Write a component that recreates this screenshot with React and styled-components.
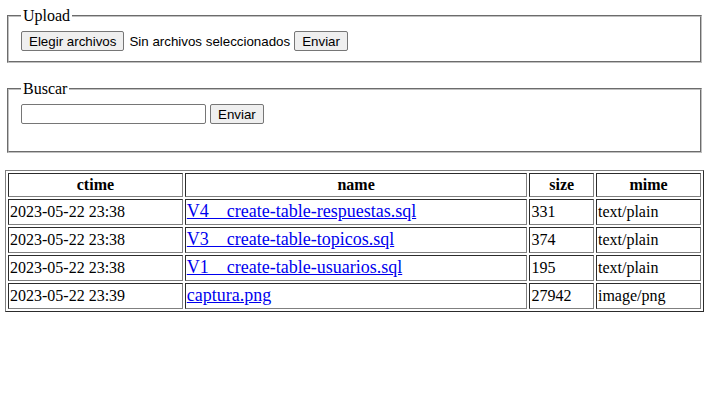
import React from "react"
import styled, { createGlobalStyle } from "styled-components"

const GlobalStyle = createGlobalStyle`
    body {
        margin: 7px 5px 5px;
        font-family: "Liberation Serif", "Times New Roman", serif;
        font-size: 16px;
        color: #000;
        background: #fff;
    }
`

const Form = styled.form`
    margin: 0 0 ${props => props.gap || 0}px 0;
`

const FieldSet = styled.fieldset`
    margin: 0 2px;
    padding: 6px 12px 10px;
    border: 2px groove #c0c0c0;
`

const Legend = styled.legend`
    padding: 0 2px;
`

const Row = styled.div`
    display: flex;
    align-items: ${props => props.top ? "flex-start" : "center"};
    height: ${props => props.h || 20}px;
`

const Button = styled.button`
    box-sizing: border-box;
    height: 20px;
    font-family: "Liberation Sans", Arial, sans-serif;
    font-size: 13.333px;
    padding: 0 7px;
    background: #efefef;
    border: 1px solid #767676;
    border-radius: 2px;
    color: #000;
    margin: 0;
    cursor: default;
`

const FileLabel = styled.span`
    font-family: "Liberation Sans", Arial, sans-serif;
    font-size: 13.333px;
    margin: 0 4px 0 5px;
`

const TextInput = styled.input`
    box-sizing: border-box;
    height: 20px;
    font-family: "Liberation Sans", Arial, sans-serif;
    font-size: 13.333px;
    width: 185px;
    padding: 1px 2px;
    border: 1px solid #767676;
    border-radius: 2px;
    margin: 0 4px 0 0;
`

const Table = styled.table`
    width: 100%;
    border: 1px outset #808080;
    border-spacing: 2px;
    margin-top: 17px;
`

const Th = styled.th`
    border: 1px inset #808080;
    padding: 1px;
    height: 20px;
    line-height: 20px;
    font-weight: bold;
    text-align: center;
`

const Td = styled.td`
    border: 1px inset #808080;
    padding: 1px;
    height: 22px;
    line-height: 22px;
    text-align: left;
`

const FileLink = styled.a`
    font-size: 18px;
    line-height: 20px;
    color: #0000ee;
    text-decoration: underline;
`

const files = [
    { ctime: "2023-05-22 23:38", name: "V4__create-table-respuestas.sql", size: 331, mime: "text/plain" },
    { ctime: "2023-05-22 23:38", name: "V3__create-table-topicos.sql", size: 374, mime: "text/plain" },
    { ctime: "2023-05-22 23:38", name: "V1__create-table-usuarios.sql", size: 195, mime: "text/plain" },
    { ctime: "2023-05-22 23:39", name: "captura.png", size: 27942, mime: "image/png" },
]

const App = () => {
    return (
        <div>
            <GlobalStyle />
            <Form gap={17} onSubmit={e => e.preventDefault()}>
                <FieldSet>
                    <Legend>Upload</Legend>
                    <Row>
                        <Button type="button">Elegir archivos</Button>
                        <FileLabel>Sin archivos seleccionados</FileLabel>
                        <Button type="submit">Enviar</Button>
                    </Row>
                </FieldSet>
            </Form>
            <Form onSubmit={e => e.preventDefault()}>
                <FieldSet>
                    <Legend>Buscar</Legend>
                    <Row h={37} top>
                        <TextInput type="text" />
                        <Button type="submit">Enviar</Button>
                    </Row>
                </FieldSet>
            </Form>
            <Table>
                <thead>
                    <tr>
                        <Th>ctime</Th>
                        <Th>name</Th>
                        <Th>size</Th>
                        <Th>mime</Th>
                    </tr>
                </thead>
                <tbody>
                    {files.map(f => (
                        <tr key={f.name}>
                            <Td>{f.ctime}</Td>
                            <Td><FileLink href="#">{f.name}</FileLink></Td>
                            <Td>{f.size}</Td>
                            <Td>{f.mime}</Td>
                        </tr>
                    ))}
                </tbody>
            </Table>
        </div>
    )
}

export default App
